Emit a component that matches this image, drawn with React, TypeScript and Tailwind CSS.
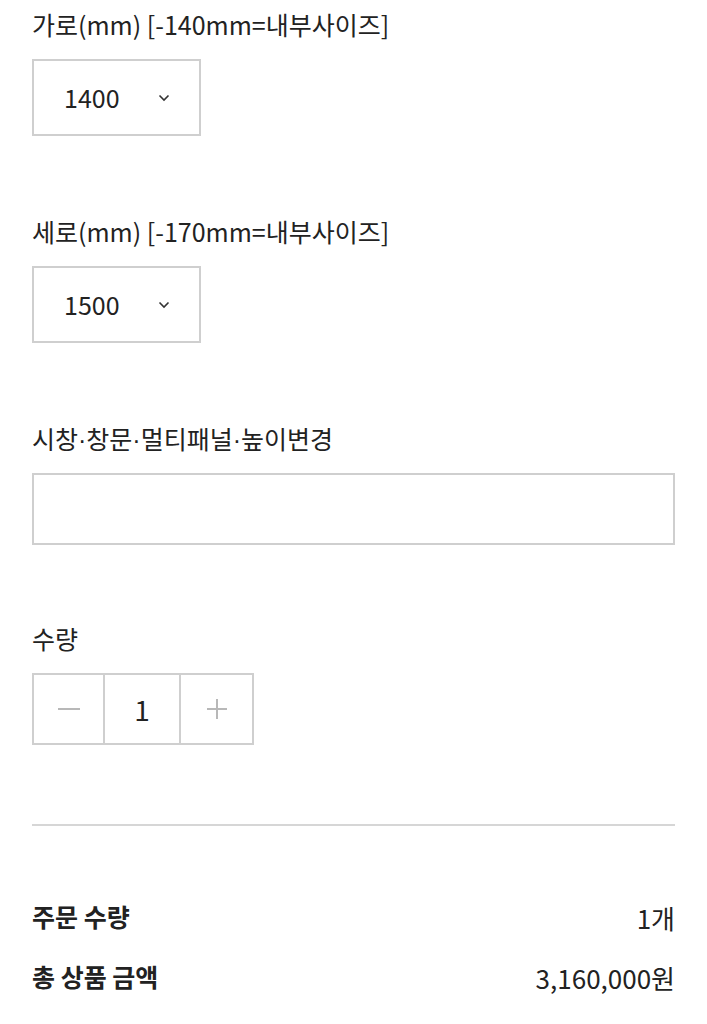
import { useState } from "react";

const FONT = "font-['Noto_Sans_CJK_KR','Noto_Sans',sans-serif]";

function Dot() {
  return <span className="font-['Liberation_Sans',sans-serif]">·</span>;
}

function Label({ children }: { children: React.ReactNode }) {
  return <div className="h-9 leading-9 text-[25px] text-[#222] mb-[17px]">{children}</div>;
}

function SelectBox({ value }: { value: string }) {
  return (
    <div className="w-[169px] h-[77px] border-2 border-[#cfcfcf] flex items-center pl-[30px] pr-[29px] justify-between bg-white">
      <span className="text-[25px] text-[#222]">{value}</span>
      <svg width="12" height="8" viewBox="0 0 12 8" fill="none">
        <path d="M1.5 1.5 L6 6 L10.5 1.5" stroke="#333" strokeWidth="1.6" />
      </svg>
    </div>
  );
}

export default function App() {
  const [qty, setQty] = useState(1);
  return (
    <div className={`${FONT} bg-white min-h-screen px-8 pt-1.5`}>
      <div className="flex flex-col">
        <section>
          <Label>가로(mm) [-140mm=내부사이즈]</Label>
          <SelectBox value="1400" />
        </section>
        <section className="mt-[77px]">
          <Label>세로(mm) [-170mm=내부사이즈]</Label>
          <SelectBox value="1500" />
        </section>
        <section className="mt-[77px]">
          <Label>
            시창<Dot />창문<Dot />멀티패널<Dot />높이변경
          </Label>
          <div className="h-[72px] border-2 border-[#cfcfcf]" />
        </section>
        <section className="mt-[75px]">
          <Label>수량</Label>
          <div className="flex w-[222px] h-[72px] border-2 border-[#cfcfcf]">
            <button
              className="w-[71px] flex items-center justify-center border-r-2 border-[#cfcfcf]"
              onClick={() => setQty(Math.max(1, qty - 1))}
            >
              <span className="block w-[22px] h-[2px] bg-[#b8b8b8]" />
            </button>
            <div className="w-[76px] flex items-center justify-center text-[28px] text-[#222] border-r-2 border-[#cfcfcf]">
              {qty}
            </div>
            <button className="flex-1 flex items-center justify-center" onClick={() => setQty(qty + 1)}>
              <svg width="22" height="22" viewBox="0 0 22 22">
                <path d="M11 1 V21 M1 11 H21" stroke="#b8b8b8" strokeWidth="2" />
              </svg>
            </button>
          </div>
        </section>
      </div>
      <div className="mt-[79px] h-[2px] bg-[#d6d6d6]" />
      <div className="mt-[73px] flex flex-col gap-6 text-[#222]">
        <div className="flex justify-between items-center h-9">
          <span className="font-bold text-[25px]">주문 수량</span>
          <span className="text-[26px]">{qty}개</span>
        </div>
        <div className="flex justify-between items-center h-9">
          <span className="font-bold text-[25px]">총 상품 금액</span>
          <span className="text-[26px]">{(3160000 * qty).toLocaleString("ko-KR")}원</span>
        </div>
      </div>
    </div>
  );
}
